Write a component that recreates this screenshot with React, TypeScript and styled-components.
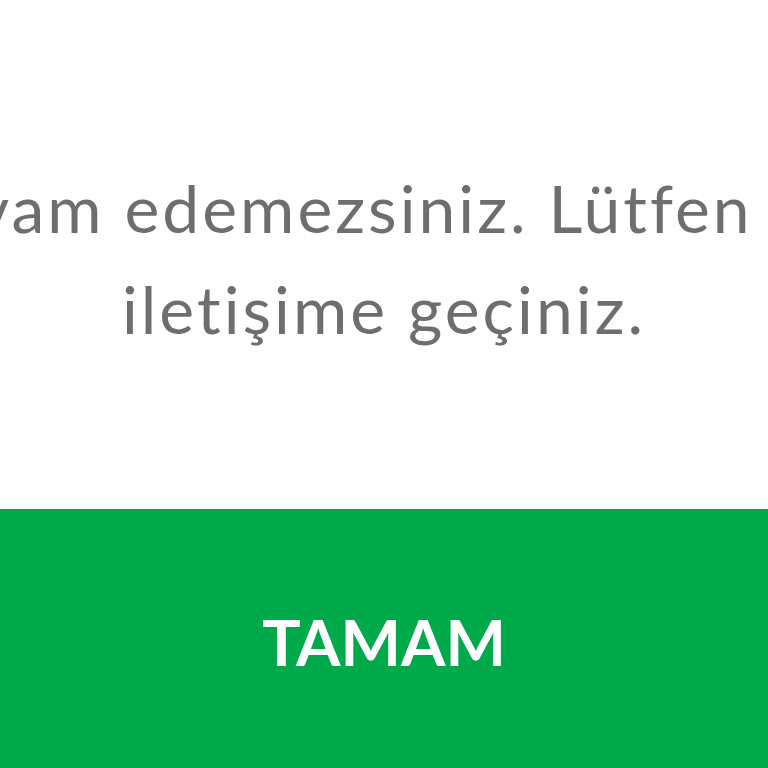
import styled, { createGlobalStyle } from "styled-components";

const GlobalStyle = createGlobalStyle`
  html, body {
    margin: 0;
    padding: 0;
    background: #ffffff;
    overflow: hidden;
  }
  body {
    font-family: Lato, "Noto Sans", "DejaVu Sans", sans-serif;
  }
`;

const Dialog = styled.div`
  width: 100vw;
  height: 100vh;
  display: flex;
  flex-direction: column;
  background: #ffffff;
`;

const Message = styled.div`
  padding-top: 157px;
  margin-bottom: 150px;
  display: flex;
  flex-direction: column;
  align-items: center;
  color: #6e6e70;
  font-size: 66px;
  line-height: 101px;
  font-weight: 400;
  letter-spacing: 3px;
  font-variant-ligatures: none;
`;

const Line = styled.span<{ $padLeft?: number }>`
  display: block;
  white-space: nowrap;
  text-align: center;
  padding-left: ${({ $padLeft }) => $padLeft ?? 0}px;
`;

const ConfirmButton = styled.button`
  border: none;
  margin: 0;
  width: 100%;
  height: 264px;
  flex-shrink: 0;
  background: #00aa4b;
  color: #ffffff;
  font-family: Lato, "Noto Sans", sans-serif;
  font-weight: 700;
  font-size: 64px;
  display: flex;
  align-items: center;
  justify-content: center;
  cursor: pointer;
`;

export default function App() {
  return (
    <>
      <GlobalStyle />
      <Dialog>
        <Message>
          <Line $padLeft={114}>Devam edemezsiniz. Lütfen bizimle</Line>
          <Line>iletişime geçiniz.</Line>
        </Message>
        <ConfirmButton>TAMAM</ConfirmButton>
      </Dialog>
    </>
  );
}
